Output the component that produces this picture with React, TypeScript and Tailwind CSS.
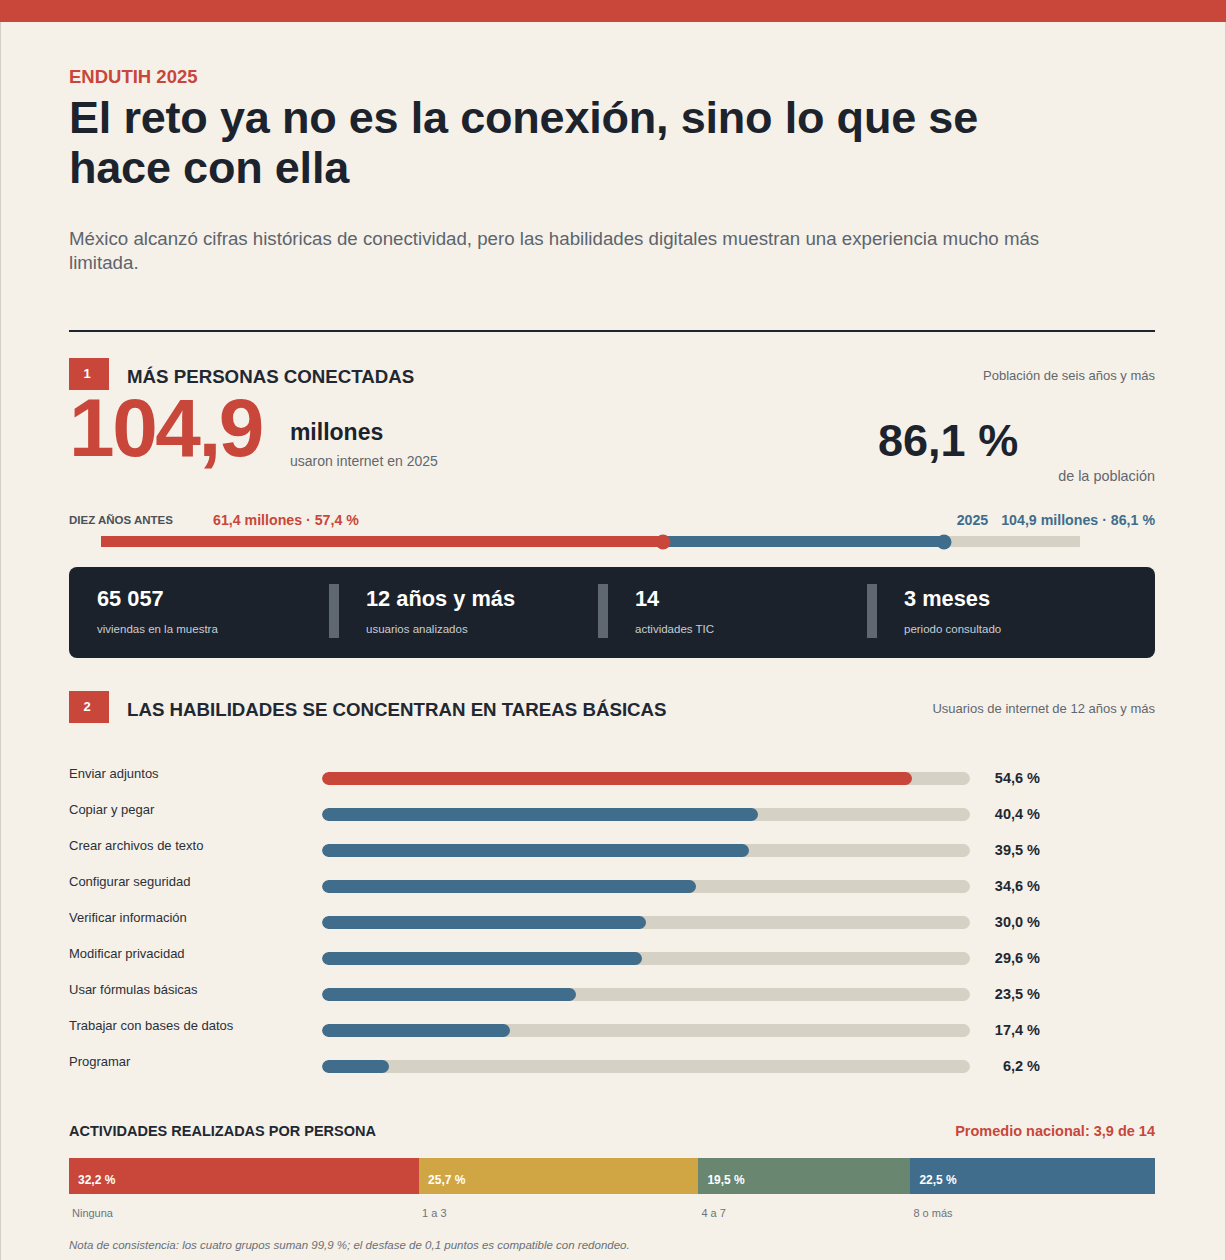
const skills = [
  { label: 'Enviar adjuntos', value: 54.6, highlight: true },
  { label: 'Copiar y pegar', value: 40.4 },
  { label: 'Crear archivos de texto', value: 39.5 },
  { label: 'Configurar seguridad', value: 34.6 },
  { label: 'Verificar información', value: 30.0 },
  { label: 'Modificar privacidad', value: 29.6 },
  { label: 'Usar fórmulas básicas', value: 23.5 },
  { label: 'Trabajar con bases de datos', value: 17.4 },
  { label: 'Programar', value: 6.2 },
];

const stats = [
  { value: '65 057', caption: 'viviendas en la muestra' },
  { value: '12 años y más', caption: 'usuarios analizados' },
  { value: '14', caption: 'actividades TIC' },
  { value: '3 meses', caption: 'periodo consultado' },
];

const groups = [
  { pct: 32.2, label: 'Ninguna', color: 'bg-[#c8473a]' },
  { pct: 25.7, label: '1 a 3', color: 'bg-[#d0a544]' },
  { pct: 19.5, label: '4 a 7', color: 'bg-[#688670]' },
  { pct: 22.5, label: '8 o más', color: 'bg-[#406d8c]' },
];

const fmt = (n: number) => n.toFixed(1).replace('.', ',') + ' %';

const SectionHeader = ({ n, title, note }: { n: string; title: string; note: string }) => (
  <div className="flex items-end justify-between">
    <div className="flex items-end gap-[18px]">
      <div className="w-[40px] h-[32px] bg-[#c8473a] text-white text-[13px] font-bold flex items-center justify-center pr-[4px]">
        {n}
      </div>
      <h2 className="pb-[1px] text-[18.7px] leading-[24px] font-bold text-[#222831] uppercase">{title}</h2>
    </div>
    <span className="pb-[4px] text-[13px] leading-[20px] text-[#62676e]">{note}</span>
  </div>
);

export default function App() {
  return (
    <div className="min-h-[1260px] bg-[#f5f1e9] font-['Liberation_Sans',Arial,sans-serif] text-[#1c232c]">
      {/* top band */}
      <div className="h-[22px] bg-[#c8473a]" />

      <div className="border-x border-[#d3cec4] pl-[68px] pr-[70px] pt-[43px] pb-[8px]">
        {/* Hero */}
        <p className="text-[18.5px] leading-[24px] font-bold text-[#c8473a]">ENDUTIH 2025</p>
        <h1 className="mt-[4px] max-w-[1000px] text-[45px] leading-[50px] font-bold tracking-[-0.2px] text-[#1c232c]">
          El reto ya no es la conexión, sino lo que se hace con ella
        </h1>
        <p className="mt-[34px] max-w-[1000px] text-[18.7px] leading-[24px] text-[#5d646d]">
          México alcanzó cifras históricas de conectividad, pero las habilidades digitales muestran una experiencia mucho más limitada.
        </p>

        <div className="mt-[55px] h-[2px] bg-[#1f2530]" />

        {/* Section 1 */}
        <div className="mt-[26px]">
          <SectionHeader n="1" title="Más personas conectadas" note="Población de seis años y más" />
        </div>

        <div className="mt-[1px] flex items-start justify-between">
          <div className="flex items-start gap-[28px]">
            <span className="text-[82px] leading-[74px] font-bold tracking-[-0.03em] text-[#c8473a]">104,9</span>
            <div className="pt-[26px]">
              <p className="text-[23px] leading-[30px] font-bold text-[#1c232c]">millones</p>
              <p className="mt-[4px] text-[14px] leading-[20px] text-[#62676e]">usaron internet en 2025</p>
            </div>
          </div>
          <div className="pt-[27px] flex items-start gap-[40px]">
            <span className="text-[45px] leading-none font-bold text-[#1c232c]">86,1 %</span>
            <span className="mt-[48px] text-[14.4px] leading-[20px] text-[#62676e]">de la población</span>
          </div>
        </div>

        {/* Timeline */}
        <div className="mt-[24px] flex items-center justify-between">
          <div className="flex items-center">
            <span className="w-[144px] text-[11.5px] leading-[20px] font-bold text-[#4b5058] uppercase">Diez años antes</span>
            <span className="text-[14.2px] leading-[20px] font-bold text-[#c8473a]">61,4 millones · 57,4 %</span>
          </div>
          <div className="flex items-center gap-[13px] text-[14.2px] leading-[20px] font-bold text-[#406d8c]">
            <span>2025</span>
            <span>104,9 millones · 86,1 %</span>
          </div>
        </div>
        <div className="mt-[6px] ml-[32px] mr-[75px] relative h-[11px] bg-[#d6d1c5]">
          <div className="absolute left-0 top-0 h-full bg-[#c8473a]" style={{ width: '57.4%' }} />
          <div className="absolute top-0 h-full bg-[#406d8c]" style={{ left: '57.4%', width: `${86.1 - 57.4}%` }} />
          <div
            className="absolute top-1/2 w-[15px] h-[15px] -translate-x-1/2 -translate-y-1/2 rounded-full bg-[#c8473a]"
            style={{ left: '57.4%' }}
          />
          <div
            className="absolute top-1/2 w-[15px] h-[15px] -translate-x-1/2 -translate-y-1/2 rounded-full bg-[#406d8c]"
            style={{ left: '86.1%' }}
          />
        </div>

        {/* Stats strip */}
        <div className="mt-[20px] rounded-[8px] bg-[#1b222b] pl-[28px] pr-[28px] pt-[17px] pb-[20px] flex items-center">
          {stats.map((s, i) => (
            <div key={s.value} className={i < stats.length - 1 ? 'flex items-center' : 'flex-1'}>
              <div className={i < stats.length - 1 ? 'w-[232px]' : ''}>
                <p className="text-[21.8px] leading-[28px] font-bold text-white">{s.value}</p>
                <p className="mt-[8px] text-[11.5px] leading-[16px] text-[#c9cdd3]">{s.caption}</p>
              </div>
              {i < stats.length - 1 && <div className="w-[10px] h-[54px] bg-[#5f6870] mr-[27px]" />}
            </div>
          ))}
        </div>

        {/* Section 2 */}
        <div className="mt-[33px]">
          <SectionHeader
            n="2"
            title="Las habilidades se concentran en tareas básicas"
            note="Usuarios de internet de 12 años y más"
          />
        </div>

        <div className="mt-[35px]">
          {skills.map((s) => (
            <div key={s.label} className="grid grid-cols-[253px_648px_70px] items-center h-[36px]">
              <span className="pb-[4px] text-[13px] leading-[20px] text-[#2b3038]">{s.label}</span>
              <div className="mt-[4px] h-[13px] rounded-full bg-[#d6d1c5] overflow-hidden">
                <div
                  className={`h-full rounded-full ${s.highlight ? 'bg-[#c8473a]' : 'bg-[#406d8c]'}`}
                  style={{ width: `${(s.value / 60) * 100}%` }}
                />
              </div>
              <span className="mt-[4px] text-right text-[14.5px] leading-[20px] font-bold text-[#222831]">
                {fmt(s.value)}
              </span>
            </div>
          ))}
        </div>

        {/* Activities per person */}
        <div className="mt-[39px] flex items-center justify-between">
          <h3 className="text-[14.5px] leading-[20px] font-bold text-[#222831] uppercase">Actividades realizadas por persona</h3>
          <span className="text-[14.5px] leading-[20px] font-bold text-[#c8473a]">Promedio nacional: 3,9 de 14</span>
        </div>

        <div className="mt-[17px] flex h-[36px]">
          {groups.map((g) => (
            <div
              key={g.label}
              className={`${g.color} flex items-end pb-[6px] pl-[9px]`}
              style={{ width: `${(g.pct / 99.9) * 100}%` }}
            >
              <span className="text-[12px] leading-[16px] font-bold text-white">{fmt(g.pct)}</span>
            </div>
          ))}
        </div>
        <div className="mt-[11px] flex">
          {groups.map((g) => (
            <div
              key={g.label}
              className="pl-[3px] text-[11px] leading-[16px] text-[#6f7378]"
              style={{ width: `${(g.pct / 99.9) * 100}%` }}
            >
              {g.label}
            </div>
          ))}
        </div>

        <p className="mt-[16px] text-[11.5px] leading-[16px] italic text-[#6b6f75]">
          Nota de consistencia: los cuatro grupos suman 99,9 %; el desfase de 0,1 puntos es compatible con redondeo.
        </p>
      </div>
    </div>
  );
}
